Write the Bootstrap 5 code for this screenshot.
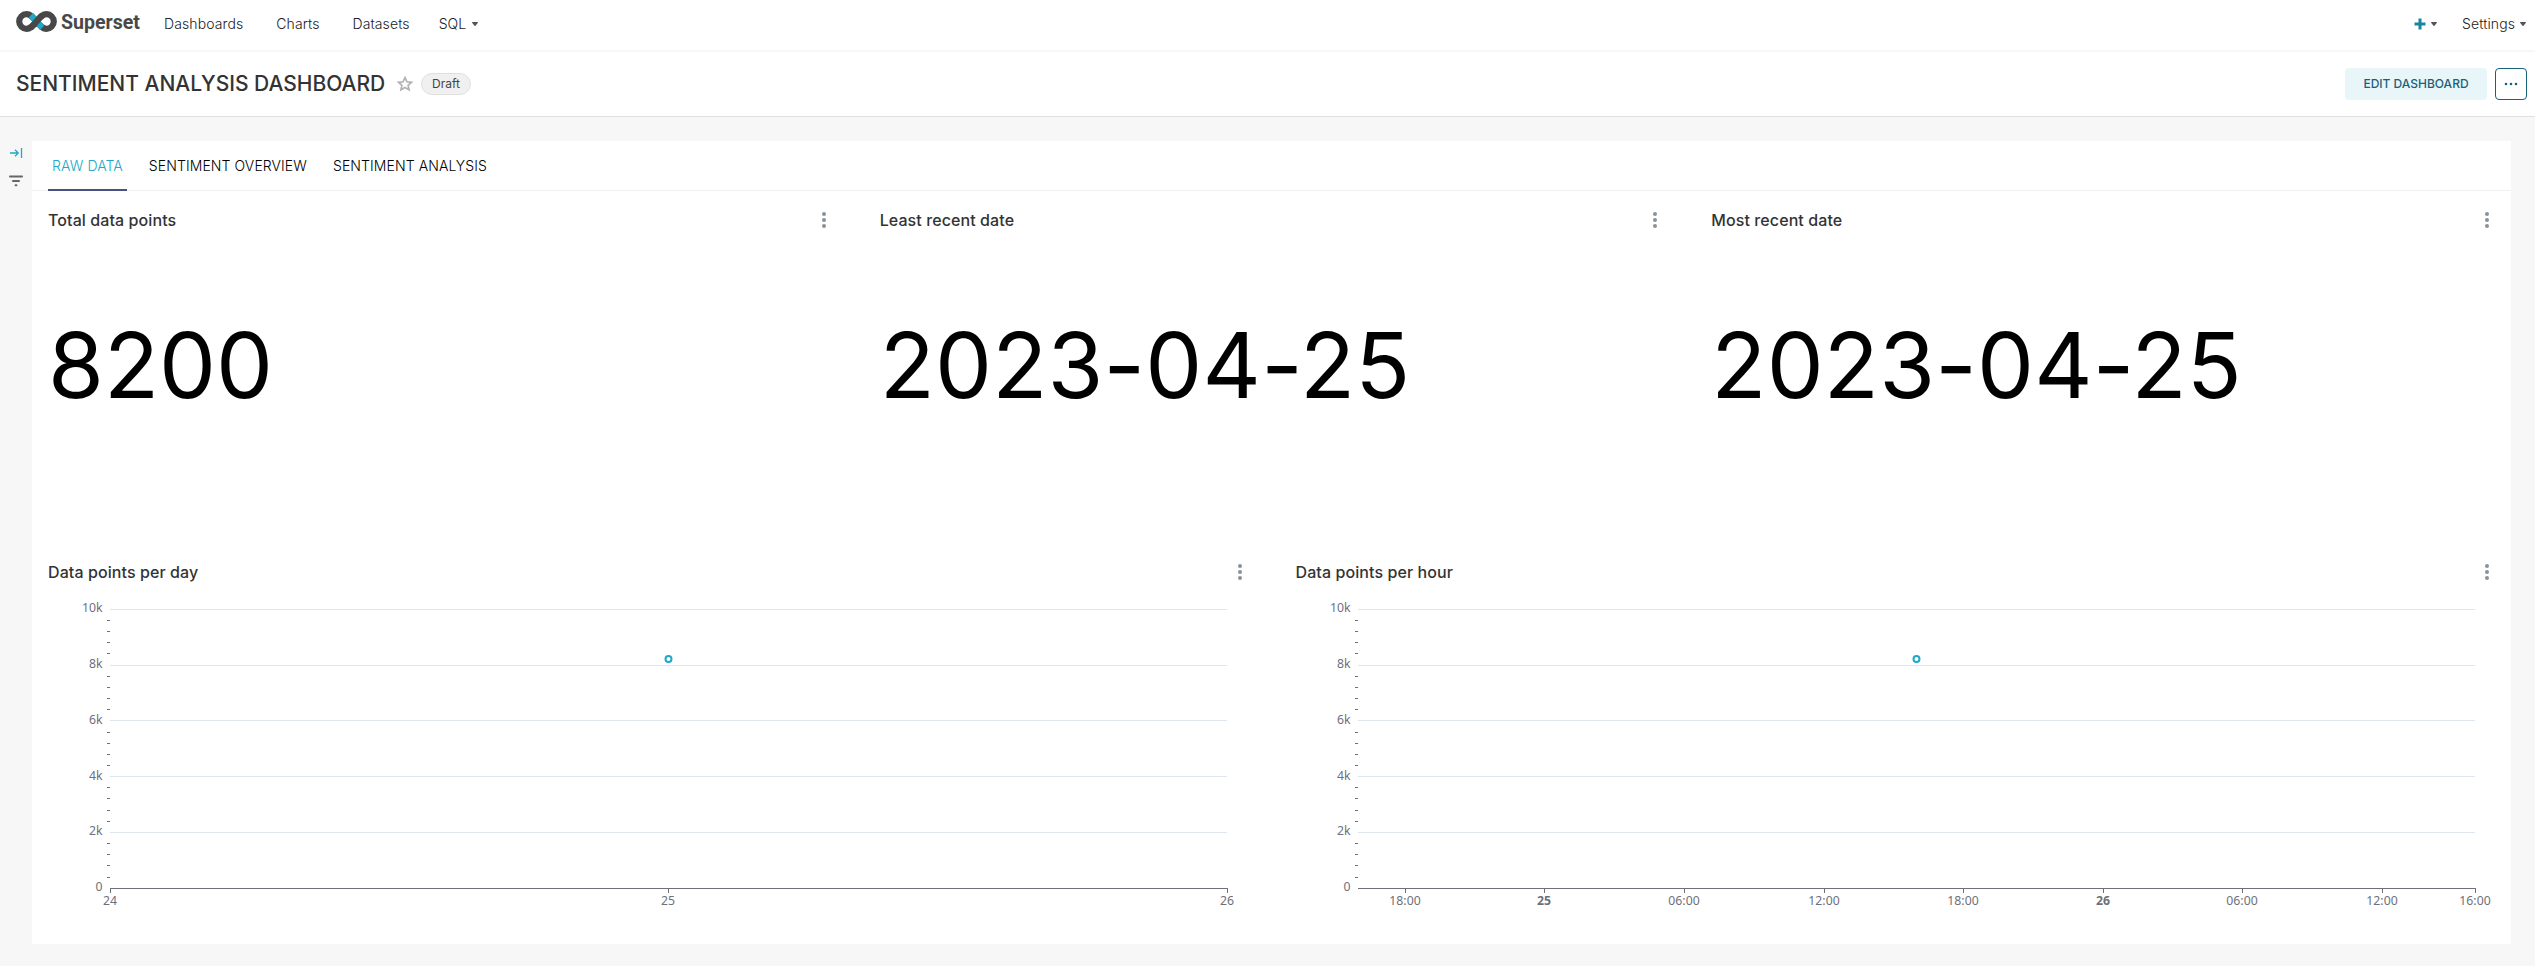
<!DOCTYPE html>
<html lang="en">
<head>
<meta charset="utf-8">
<meta name="viewport" content="width=device-width, initial-scale=1">
<title>Sentiment Analysis Dashboard</title>
<link href="https://cdn.jsdelivr.net/npm/bootstrap@5.3.0/dist/css/bootstrap.min.css" rel="stylesheet">
<style>
body{font-family:Inter,"Liberation Sans",sans-serif;font-size:14px;line-height:20px;color:#333;background:#f7f7f7;height:966px;overflow:hidden}
svg{display:block;flex:none}
.topnav{height:52px;border-bottom:2px solid #f7f7f7;padding:0 9px 0 16px;--bs-navbar-padding-y:0;--bs-navbar-nav-link-padding-x:0}
.topnav .nav-link{padding-top:0;padding-bottom:0;color:#222;font-weight:300;letter-spacing:.1px;margin-top:-2px;white-space:nowrap}
.main-links{margin-left:22px;gap:33px}
.chev{width:6px;height:4px;fill:#555}
.titlebar{height:65px;border-bottom:1px solid #e0e0e0;padding:0 8px 0 16px}
.titlebar h1{font-size:21px;line-height:24px;font-weight:500;margin:0;width:369px;white-space:nowrap}
.draft{height:22px;width:50px;font-size:12px;line-height:20px;font-weight:400;border:1px solid #e0e0e0;background:#f0f0f0!important;color:#444;padding:0}
.btn-edit{width:142px;height:32px;padding:0;font-size:12px;font-weight:500;color:#1a617a;background:#e9f6f9;border:0;border-radius:4px}
.btn-dots{width:32px;height:32px;padding:0;border:1px solid #156378;border-radius:4px;background:#fff}
.siderail{width:32px;padding-top:6px}
.board{height:803px;width:2479px;margin-top:24px;background:#fff}
.board-tabs{height:50px;padding:0 16px;border-bottom:1px solid #f0f0f0;gap:18px;--bs-nav-link-padding-x:4px}
.board-tabs .nav-link{height:50px;line-height:48px;padding-top:1px;padding-bottom:0;color:#000;font-weight:300;letter-spacing:.1px;border-bottom:2px solid transparent;white-space:nowrap}
.board-tabs .nav-link.active{color:#20a7c9;border-bottom-color:#484f81}
.tiles{margin:0 -8px;--bs-gutter-x:48px}
.tile-head{height:24px;margin-top:17px}
.tile-head h2{font-size:16px;line-height:24px;font-weight:550;letter-spacing:.09px;margin:0}
.tile-head svg{width:16px;height:16px;fill:#879399}
.bignum{font-size:90.400px;line-height:110px;color:#000;margin-top:78px;height:233px;white-space:nowrap}
.bignum.date{letter-spacing:.2px}
.grid-line{stroke:#e0e6f1}
.axis{stroke:#6e7079;fill:none}
.crisp{shape-rendering:crispEdges}
.lbl{font:12.250px "Noto Sans","Liberation Sans",sans-serif;fill:#6e7079}
</style>
</head>
<body>
<nav class="navbar navbar-expand topnav bg-white">
  <a class="navbar-brand p-0 m-0" href="#" aria-label="Superset">
    <svg class="overflow-visible" width="126" height="50" viewBox="0 0 126 50">
      <g fill="none" stroke="#484848" stroke-width="6.200">
        <path d="M20.500 21.500C16.500 17 14.500 14.200 10.500 14.200A7.300 7.300 0 0 0 10.500 28.800C14.500 28.800 16.500 26 20.500 21.500C24.500 17 26.500 14.200 30.500 14.200A7.300 7.300 0 0 1 30.500 28.800C26.500 28.800 24.500 26 20.500 21.500Z"/>
        <path stroke="#20a7c9" d="M14.800 15.300Q17 17.300 20.500 21.500T26.200 27.700"/>
        <path d="M14.600 27.800Q17.500 25.300 20.500 21.500Q23.500 17.700 26.400 15.200"/>
      </g>
      <text x="45" y="29" textLength="79" lengthAdjust="spacingAndGlyphs" font-family="Roboto,sans-serif" font-weight="700" font-size="20.500" fill="#484848">Superset</text>
    </svg>
  </a>
  <div class="navbar-nav align-items-center main-links">
    <a class="nav-link" href="#">Dashboards</a>
    <a class="nav-link" href="#">Charts</a>
    <a class="nav-link" href="#">Datasets</a>
    <a class="nav-link d-flex align-items-center" style="margin-left:-4px;gap:6px" href="#">SQL <svg class="chev" viewBox="0 0 6 4"><path d="M.5 0h5a.5.5 0 0 1 .4.800L3.500 3.700a.6.6 0 0 1-1 0L.1.800A.5.5 0 0 1 .5 0z"/></svg></a>
  </div>
  <div class="navbar-nav align-items-center ms-auto">
    <a class="nav-link d-flex align-items-center" style="gap:5px;margin-right:25px" href="#" aria-label="New"><svg width="12" height="12" viewBox="0 0 12 12"><path d="M6 .5v11M.5 6h11" stroke="#1a85a0" stroke-width="3"/></svg><svg class="chev" viewBox="0 0 6 4"><path d="M.5 0h5a.5.5 0 0 1 .4.800L3.500 3.700a.6.6 0 0 1-1 0L.1.800A.5.5 0 0 1 .5 0z"/></svg></a>
    <a class="nav-link d-flex align-items-center" style="gap:5px" href="#">Settings<svg class="chev" viewBox="0 0 6 4"><path d="M.5 0h5a.5.5 0 0 1 .4.800L3.500 3.700a.6.6 0 0 1-1 0L.1.800A.5.5 0 0 1 .5 0z"/></svg></a>
  </div>
</nav>

<header class="titlebar d-flex align-items-center bg-white">
  <h1>SENTIMENT ANALYSIS DASHBOARD</h1>
  <svg style="margin:0 8px 0 12px" width="16" height="16" viewBox="0 0 16 16"><path d="M8 1.600l1.900 4.200 4.600.5-3.400 3.100.95 4.500L8 11.600l-4.050 2.300.95-4.500L1.500 6.300l4.600-.5z" fill="none" stroke="#b2b2b2" stroke-width="1.700"/></svg>
  <span class="badge rounded-pill draft">Draft</span>
  <div class="d-flex gap-2 ms-auto">
    <button class="btn btn-edit" type="button">EDIT DASHBOARD</button>
    <button class="btn btn-dots d-flex align-items-center justify-content-center" type="button" aria-label="More"><svg width="14" height="4" viewBox="0 0 14 4" fill="#156378"><circle cx="2" cy="2" r="1.300"/><circle cx="7" cy="2" r="1.300"/><circle cx="12" cy="2" r="1.300"/></svg></button>
  </div>
</header>

<div class="d-flex">
  <aside class="siderail d-flex flex-column align-items-center">
    <svg style="margin-top:24px" width="14" height="12" viewBox="0 0 14 12" fill="none" stroke="#20a7c9" stroke-width="1.300"><path d="M1 6h8M6 2.800L9.200 6 6 9.200"/><path d="M12.500 1v10"/></svg>
    <svg style="margin-top:16px" width="14" height="12" viewBox="0 0 14 12" stroke="#666" stroke-width="2" stroke-linecap="round"><path d="M1 1.500h12M4 6h6M6.600 10.300h.8"/></svg>
  </aside>
  <main class="board">
    <div class="nav board-tabs">
      <a class="nav-link active" href="#">RAW DATA</a>
      <a class="nav-link" href="#">SENTIMENT OVERVIEW</a>
      <a class="nav-link" href="#">SENTIMENT ANALYSIS</a>
    </div>
    <div class="row tiles" id="numbers"></div>
    <div class="row tiles" id="charts"></div>
  </main>
</div>
<script src="https://cdn.jsdelivr.net/npm/bootstrap@5.3.0/dist/js/bootstrap.bundle.min.js"></script>
<script>
const head = t => `<div class="tile-head d-flex align-items-center justify-content-between"><h2>${t}</h2><svg viewBox="0 0 16 16"><circle cx="8" cy="2" r="2"/><circle cx="8" cy="8" r="2"/><circle cx="8" cy="14" r="2"/></svg></div>`;

document.getElementById('numbers').innerHTML = [
  ['Total data points', '8200', ''], ['Least recent date', '2023-04-25', 'date'], ['Most recent date', '2023-04-25', 'date']
].map(([t, v, c]) => `<div class="col-4">${head(t)}<div class="bignum ${c}">${v}</div></div>`).join('');

// Rows of the y axis: line, label, label baseline
const major = [[19,'10k',22],[75,'8k',78],[130,'6k',134],[186,'4k',190],[242,'2k',245],[298,'0',301]];
const minor = [30,41,52,63,86,97,108,119,142,153,164,175,197,208,220,231,253,264,275,287];
function plot(x0, x1, ticks, px) {
  let s = '<g class="crisp">';
  major.slice(0, 5).forEach(m => s += `<path class="grid-line" d="M${x0} ${m[0] + .5}H${x1}"/>`);
  minor.forEach(y => s += `<path class="axis" d="M${x0 - 3} ${y + .5}h3"/>`);
  s += `<path class="axis" d="M${x0} 298.5H${x1 + 1}"/>`;
  ticks.forEach(t => s += `<path class="axis" d="M${t[0] + .5} 298v5"/>`);
  s += '</g>';
  major.forEach(m => s += `<text class="lbl" text-anchor="end" x="${x0 - 7.5}" y="${m[2]}">${m[1]}</text>`);
  ticks.forEach(t => s += `<text class="lbl" text-anchor="middle" x="${t[0]}" y="315"${t[2] ? ' style="font-weight:700"' : ''}>${t[1]}</text>`);
  return s + `<circle cx="${px}" cy="69" r="3" fill="#fff" stroke="#1fa8c9" stroke-width="2"/>`;
}
const day = plot(62, 1179, [[62,'24'],[620,'25'],[1179,'26']], 620.5);
const hour = plot(62, 1179, [[109,'18:00'],[248,'25',1],[388,'06:00'],[528,'12:00'],[667,'18:00'],[807,'26',1],[946,'06:00'],[1086,'12:00'],[1179,'16:00']], 620.5);
document.getElementById('charts').innerHTML = [
  ['Data points per day', day], ['Data points per hour', hour]
].map(([t, p]) => `<div class="col-6">${head(t)}<svg class="overflow-visible" style="margin-top:6px" width="1199" height="330">${p}</svg></div>`).join('');
</script>
</body>
</html>
